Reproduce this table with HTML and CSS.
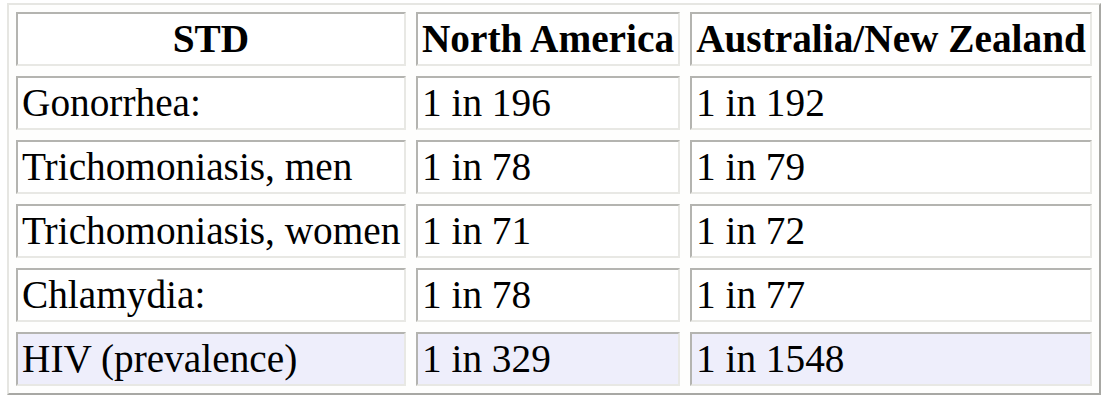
FILE: index.html
```html
<!DOCTYPE html>
<html>
<head>
<meta charset="utf-8">
<link rel="stylesheet" href="styles.css">
</head>
<body>
<div class="std-table">
  <div class="cell head">STD</div>
  <div class="cell head">North America</div>
  <div class="cell head">Australia/New Zealand</div>

  <div class="cell">Gonorrhea:</div>
  <div class="cell">1 in 196</div>
  <div class="cell">1 in 192</div>

  <div class="cell">Trichomoniasis, men</div>
  <div class="cell">1 in 78</div>
  <div class="cell">1 in 79</div>

  <div class="cell">Trichomoniasis, women</div>
  <div class="cell">1 in 71</div>
  <div class="cell">1 in 72</div>

  <div class="cell">Chlamydia:</div>
  <div class="cell">1 in 78</div>
  <div class="cell">1 in 77</div>

  <div class="cell hl">HIV (prevalence)</div>
  <div class="cell hl">1 in 329</div>
  <div class="cell hl">1 in 1548</div>
</div>
</body>
</html>
```

FILE: styles.css
```css
html, body {
  margin: 0;
  padding: 0;
  background: #ffffff;
}

body {
  padding: 3px 0 0 7px;
  font-family: "Liberation Serif", "Times New Roman", serif;
  color: #000;
}

.std-table {
  display: inline-grid;
  grid-template-columns: 390px 264px 402px;
  grid-auto-rows: 54px;
  gap: 10px;
  padding: 7px;
  border-style: solid;
  border-width: 2px;
  border-color: #e6e6e2 #a8a8a4 #a8a8a4 #e6e6e2;
  background: #fefefd;
}

.cell {
  box-sizing: border-box;
  border-style: solid;
  border-width: 2px;
  border-color: #b4b4b0 #e8e8e4 #e8e8e4 #b4b4b0;
  background: #ffffff;
  padding: 0 4px;
  font-size: 39.3px;
  line-height: 50px;
  white-space: nowrap;
}

.head {
  font-weight: bold;
  text-align: center;
  padding: 0;
}

.hl {
  background: #eeeefb;
}
```
